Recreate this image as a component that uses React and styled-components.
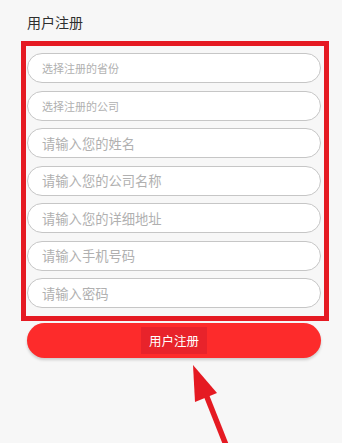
import React from "react";
import styled, { createGlobalStyle } from "styled-components";

const Global = createGlobalStyle`
  html, body { margin: 0; padding: 0; background: #f7f7f7; }
  body { font-family: "Noto Sans CJK SC", "Noto Sans", sans-serif; }
  * { box-sizing: border-box; }
`;

const Page = styled.div`
  position: relative;
  width: 342px;
  height: 443px;
  overflow: hidden;
  background: #f7f7f7;
`;

const Title = styled.h1`
  margin: 0;
  padding: 12px 0 0 27px;
  font-size: 14px;
  line-height: 20px;
  font-weight: 400;
  color: #2e2e2e;
`;

const FormBox = styled.div`
  margin: 9px 0 0 21px;
  width: 308px;
  border: 5px solid #e51a22;
  padding: 7px 0 8px 1px;
  display: flex;
  flex-direction: column;
  gap: 7.5px;
`;

const Field = styled.input`
  display: block;
  width: 294px;
  height: 30px;
  border: 1px solid #c6c6c6;
  border-radius: 15px;
  background: #fff;
  padding: 0 0 0 14px;
  font-family: inherit;
  font-size: ${(p) => (p.$small ? "11px" : "13.3px")};
  color: #333;
  outline: none;
  &::placeholder { color: #b0b0b0; }
`;

const Submit = styled.button`
  display: flex;
  align-items: center;
  justify-content: center;
  margin: 2px 0 0 27px;
  width: 294px;
  height: 35px;
  border: none;
  border-radius: 18px;
  background: #fd2b2b;
  box-shadow: 0 2px 3px rgba(0, 0, 0, 0.18);
  padding: 0;
  cursor: pointer;
`;

const SubmitLabel = styled.span`
  display: inline-block;
  height: 27px;
  line-height: 27px;
  padding: 0 8px;
  background: #e8232b;
  color: #fff;
  font-family: "Noto Sans CJK SC", sans-serif;
  font-size: 12.5px;
`;

const Annotation = styled.svg`
  position: absolute;
  left: 0;
  top: 0;
  pointer-events: none;
`;

const fields = [
  { ph: "选择注册的省份", small: true },
  { ph: "选择注册的公司", small: true },
  { ph: "请输入您的姓名" },
  { ph: "请输入您的公司名称" },
  { ph: "请输入您的详细地址" },
  { ph: "请输入手机号码" },
  { ph: "请输入密码", type: "password" },
];

export default function App() {
  return (
    <Page>
      <Global />
      <Title>用户注册</Title>
      <FormBox>
        {fields.map((f) => (
          <Field key={f.ph} placeholder={f.ph} $small={f.small} type={f.type || "text"} />
        ))}
      </FormBox>
      <Submit>
        <SubmitLabel>用户注册</SubmitLabel>
      </Submit>
      <Annotation width="342" height="443" viewBox="0 0 342 443">
        <line x1="205" y1="392" x2="228" y2="450" stroke="#e51a22" strokeWidth="5.5" />
        <polygon points="193,365 195,402 217,393" fill="#e51a22" />
      </Annotation>
    </Page>
  );
}
